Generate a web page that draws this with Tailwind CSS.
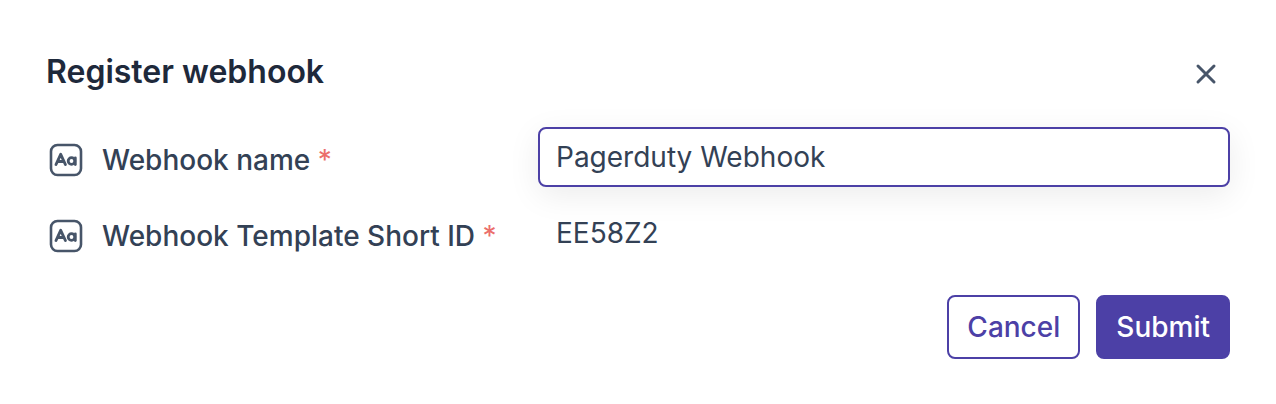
<!DOCTYPE html>
<html lang="en">
<head>
<meta charset="utf-8">
<meta name="viewport" content="width=device-width, initial-scale=1">
<title>Register webhook</title>
<script src="https://cdn.jsdelivr.net/npm/@tailwindcss/browser@4"></script>
</head>
<body class="bg-white font-['Inter',sans-serif] text-[28px] leading-10 text-[#334155]">
<svg class="hidden" aria-hidden="true">
  <symbol id="text-type" viewBox="0 0 40 40">
    <g fill="none" stroke="#475569" stroke-linecap="round" stroke-linejoin="round">
      <rect x="5" y="5" width="30" height="30" rx="6.500" stroke-width="2.600"/>
      <path stroke-width="2.900" d="M10 24.500 14.700 14.300l4.700 10.200M11.700 21.500h6"/>
      <circle cx="25.500" cy="21" r="3.300" stroke-width="2.800"/>
      <path stroke-width="2.800" d="M29.300 17.800v6.700"/>
    </g>
  </symbol>
</svg>
<main class="px-[46px] pt-12 pb-11">
  <form>
    <header class="flex items-center justify-between">
      <h1 class="text-[32px] leading-12 font-semibold text-[#1e293b]">Register webhook</h1>
      <button type="button" aria-label="Close" class="mr-1 flex size-10 items-center justify-center">
        <svg class="mt-1 size-6" viewBox="0 0 24 24" fill="none" stroke="#475569" stroke-width="3" stroke-linecap="round"><path d="M4 4l16 16M20 4 4 20"/></svg>
      </button>
    </header>
    <div class="mt-[31px] flex flex-col gap-4">
      <div class="flex items-center">
        <label for="name" class="flex w-[492px] shrink-0 items-center gap-4 pt-1.5 font-medium">
          <svg class="size-10 shrink-0"><use href="#text-type"/></svg>
          <span>Webhook name <span class="font-normal text-[#eb6f6b]">*</span></span>
        </label>
        <input id="name" type="text" required value="Pagerduty Webhook" class="h-15 min-w-0 flex-1 rounded-lg border-2 border-[#4c40a6] bg-white px-4 shadow-[0_8px_32px_rgba(0,0,0,0.08)] outline-none">
      </div>
      <div class="flex items-center">
        <label for="template" class="flex w-[492px] shrink-0 items-center gap-4 pt-1.5 font-medium">
          <svg class="size-10 shrink-0"><use href="#text-type"/></svg>
          <span>Webhook Template Short ID <span class="font-normal text-[#eb6f6b]">*</span></span>
        </label>
        <input id="template" type="text" required value="EE58Z2" class="h-15 min-w-0 flex-1 rounded-lg border-2 border-transparent px-4 outline-none">
      </div>
    </div>
    <footer class="mt-8 flex justify-end gap-4 font-medium">
      <button type="button" class="h-16 rounded-lg border-2 border-[#4c40a6] px-[18px] text-[#4c40a6]">Cancel</button>
      <button type="submit" class="h-16 rounded-lg border-2 border-[#4c40a6] bg-[#4c40a6] px-[18px] text-white">Submit</button>
    </footer>
  </form>
</main>
</body>
</html>
